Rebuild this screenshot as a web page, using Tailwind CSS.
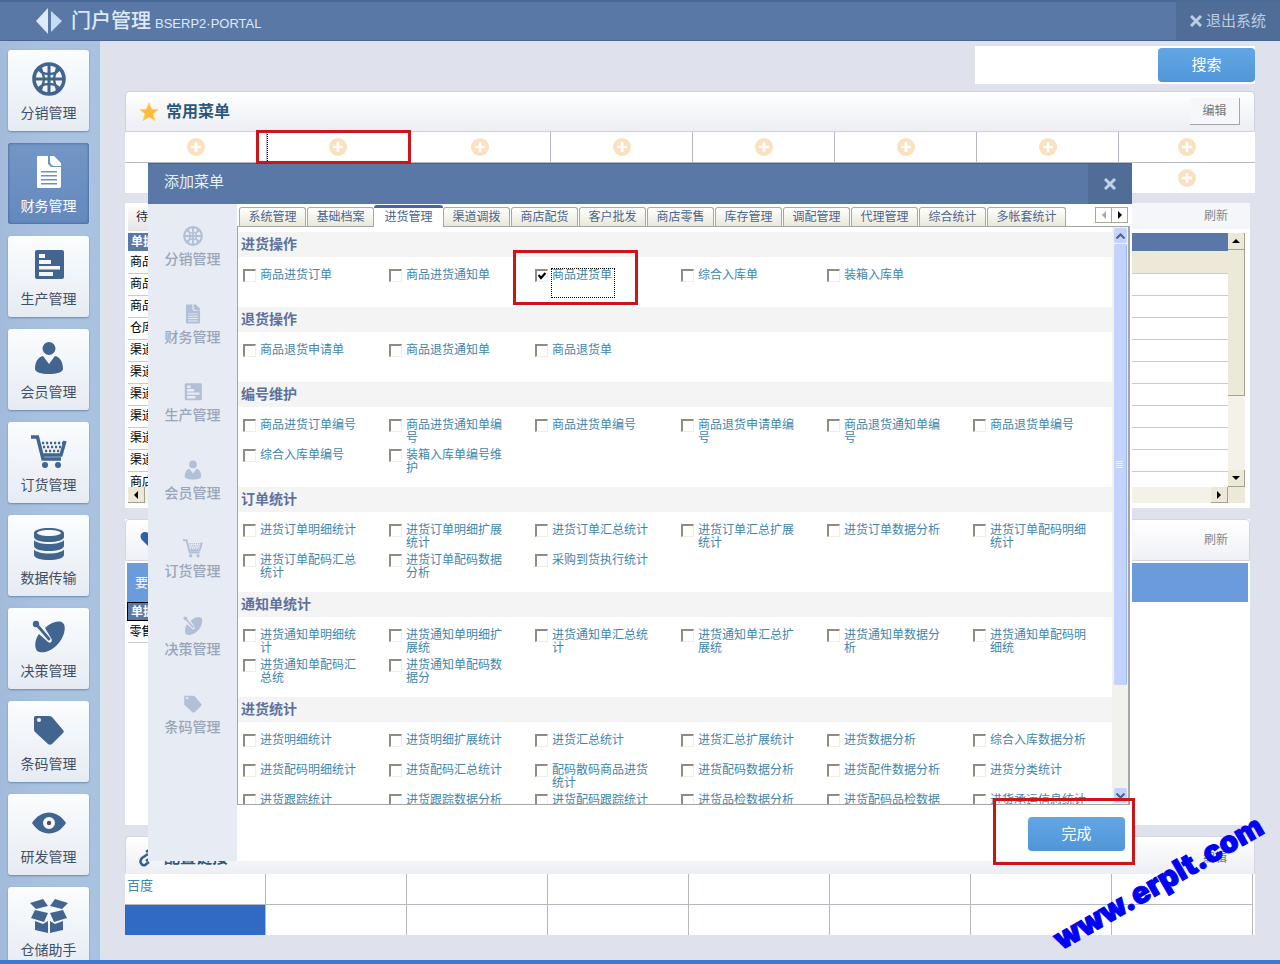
<!DOCTYPE html>
<html lang="zh-CN">
<head>
<meta charset="utf-8">
<title>门户管理 BSERP2·PORTAL</title>
<script src="https://cdn.jsdelivr.net/npm/@tailwindcss/browser@4"></script>
</head>
<body class="font-['Liberation_Sans','Noto_Sans_CJK_SC',sans-serif] text-xs text-gray-800">

<svg class="hidden" xmlns="http://www.w3.org/2000/svg">
  <symbol id="i-globe" viewBox="0 0 34 34"><g fill="none" stroke="currentColor" stroke-width="2.400"><circle cx="17" cy="17" r="15" stroke-width="3.600"/><path d="M17 2v30M2 17h30" stroke-width="3"/><path d="M6 6c2 5 6 6 11 6s9-1 11-6M6 28c2-5 6-6 11-6s9 1 11 6M9 4c-1 3 3 8 3 13s-4 10-3 13M25 4c1 3-3 8-3 13s4 10 3 13"/></g></symbol>
  <symbol id="i-doc" viewBox="0 0 34 34"><path fill="currentColor" fill-rule="evenodd" d="M6 1h10v8l3 3h10v19a2 2 0 0 1-2 2H6a1 1 0 0 1-1-1V2a1 1 0 0 1 1-1zM9 16h16v1.600H9zM9 20h16v1.600H9zM9 24h16v1.600H9zM9 28h16v1.600H9z"/><path fill="currentColor" d="M18 1h4l7 7v3h-6c-3 0-5-2-5-5z"/></symbol>
  <symbol id="i-list" viewBox="0 0 34 34"><path fill="currentColor" fill-rule="evenodd" d="M5 2h25a2 2 0 0 1 2 2v25a2 2 0 0 1-2 2H5a2 2 0 0 1-2-2V4a2 2 0 0 1 2-2zM7 6v4h6V6zM7 12v4h12v-4zM7 18v3.500h21V18zM7 24v4h14v-4z"/></symbol>
  <symbol id="i-user" viewBox="0 0 34 34"><g fill="currentColor"><circle cx="17" cy="7.500" r="6.500"/><path d="M3 28c0-7 3-12 8-13l6 8 6-8c5 1 8 6 8 13 0 3-6 5-14 5S3 31 3 28z"/></g></symbol>
  <symbol id="i-cart" viewBox="0 0 36 34"><path fill="none" stroke="currentColor" stroke-width="3.400" d="M0 3h6.500l5.500 22h18M34 7l-4 14H11"/><path fill="none" stroke="currentColor" stroke-width="2.400" stroke-dasharray="2.200 1.800" d="M11 9h21M12 13h18M14 17h15"/><g fill="currentColor"><circle cx="14" cy="31" r="3"/><circle cx="27" cy="31" r="3"/></g></symbol>
  <symbol id="i-db" viewBox="0 0 34 34"><g fill="currentColor"><path fill-rule="evenodd" d="M17 1c8 0 15 2 15 5v4c0 3-7 5-15 5S2 13 2 10V6c0-3 7-5 15-5zm0 2C10 3 5 4.500 5 6s5 3 12 3 12-1.500 12-3-5-3-12-3z"/><path d="M2 13c2 2.500 8 4 15 4s13-1.500 15-4v6c0 3-7 5-15 5S2 22 2 19z"/><path d="M2 22.500c2 2.500 8 4 15 4s13-1.500 15-4V28c0 3-7 5-15 5S2 31 2 28z"/></g></symbol>
  <symbol id="i-dish" viewBox="0 0 34 34"><path fill="currentColor" fill-rule="evenodd" d="M13 8c6-6 14-8 18-5 4 4 1 15-6 22-7 7-15 9-20 6-3-4-2-12 2-17l9 8c3 2 5-1 3-4z"/><path stroke="currentColor" stroke-width="2.800" stroke-linecap="round" d="M5 5l12 14"/><circle cx="4" cy="4" r="3.200" fill="currentColor"/></symbol>
  <symbol id="i-tag" viewBox="0 0 34 34"><path fill="currentColor" fill-rule="evenodd" d="M3 3h14c1 0 2 .5 3 1l11 13c1 1 1 2 0 3L20 31c-1 1-3 1-4 0L3 19c-1-1-1-2-1-3V4zM7 5a2 2 0 1 0 0 4 2 2 0 0 0 0-4z"/></symbol>
  <symbol id="i-eye" viewBox="0 0 34 34"><path fill="currentColor" fill-rule="evenodd" d="M0 17C9 3 25 3 34 17 25 31 9 31 0 17zM17 11a6 6 0 1 0 0 12 6 6 0 0 0 0-12z"/><circle cx="17" cy="17" r="2.200" fill="#5a4a50"/></symbol>
  <symbol id="i-box" viewBox="0 0 38 34"><path fill="currentColor" d="M0 4l13-4 5 7-12 3zM38 4L25 0l-5 7 12 3zM5 11l13 3-4 9-13-4zM33 11l-13 3 4 9 13-4zM5 22l8 3 5-3v12L5 31zM33 22l-8 3-5-3v12l13-3z"/></symbol>
  <symbol id="i-x" viewBox="0 0 12 12"><path stroke="currentColor" stroke-width="3" d="M1 1l10 10M11 1L1 11"/></symbol>
  <symbol id="i-plus" viewBox="0 0 18 18"><circle cx="9" cy="9" r="9" fill="#fbe1c0"/><path stroke="#fff" stroke-width="2.600" d="M9 4v10M4 9h10"/></symbol>
</svg>

<div class="relative flex h-screen flex-col overflow-hidden bg-[#dfe1ed]">
  <header class="flex h-[41px] shrink-0 items-stretch justify-between border-t-2 border-b border-t-[#4a6a98] border-b-[#46648f] bg-[#5a78a5]">
    <div class="flex items-center pl-9 text-[#dceafa]">
      <svg class="size-[26px]" viewBox="0 0 26 26"><path d="M12 0v26L0 13z" fill="#dceafa"/><path d="M15 3v21l11-11z" fill="#c5dcf5"/></svg>
      <h1 class="ml-[9px] text-xl leading-8 font-medium">门户管理</h1>
      <span class="ml-1 pt-1.5 text-[13px]">BSERP2·PORTAL</span>
    </div>
    <button class="flex items-center gap-1 bg-[#506d97] pr-[14px] pl-[14px] text-[15px] text-[#bccde4]"><svg class="size-3"><use href="#i-x"/></svg>退出系统</button>
  </header>

  <div class="flex min-h-0 flex-1">
    <nav id="side" class="flex w-[100px] shrink-0 flex-col items-center gap-3 overflow-hidden bg-gradient-to-r from-[#a3bbdb] via-[#a9c2e0] to-[#a9c2e0] pt-[9px] pr-[3px]"></nav>

    <main class="flex min-w-0 flex-1 flex-col pr-[25px] pl-[25px]">
      <form class="mt-[5px] flex h-[38px] w-[280px] shrink-0 self-end bg-white" onsubmit="return false">
        <input aria-label="搜索内容" class="min-w-0 flex-1 px-2 text-sm outline-none">
        <button class="mt-0.5 h-[34px] w-[97px] rounded bg-gradient-to-b from-[#62a6e4] to-[#5096d8] text-[15px] text-white">搜索</button>
      </form>

      <section class="mt-[7px] shrink-0">
        <div class="flex h-[41px] items-center rounded-t border border-[#ccd1de] bg-gradient-to-b from-white to-[#eceef4] pr-3.5 pl-[13px]">
          <svg class="size-5" viewBox="0 0 22 22"><path fill="#fdbb3a" stroke="#fcd27a" d="M11 1l3 7 7 .5-5.500 4.500 2 7.500L11 16.500 4.500 20.500l2-7.500L1 8.500 8 8z"/></svg>
          <h2 class="ml-[7px] text-base font-bold text-[#2a5878]">常用菜单</h2>
          <button class="ml-auto h-[27px] w-[50px] border-r border-b border-[#a5a5a5] bg-[#f6f7fa] text-[#777]">编辑</button>
        </div>
        <div id="fav" class="grid grid-cols-[repeat(7,142px)_1fr] bg-white"></div>
      </section>

      <section class="mt-[10px] mr-[5px] h-[305px] shrink-0 bg-white px-[3px]">
        <div class="flex h-[30px] items-start justify-between">
          <h2 class="h-7 w-20 bg-gradient-to-b from-white to-[#e4e4e4] pl-2 leading-7">待办事项</h2>
          <div class="-mr-[3px] h-[26px] flex-1 bg-[#f5f6fa] pr-[22px] text-right"><button class="leading-[26px] text-[#888]">刷新</button></div>
        </div>
        <div class="mr-0.5 grid grid-cols-[1fr_17px] grid-rows-[254px_16px]">
          <div class="overflow-hidden">
            <table class="w-full table-fixed border-collapse">
              <thead><tr class="h-[18px] bg-[#5a78a5] text-left text-white"><th class="w-[110px] pl-[3px] leading-[17px]">单据类型</th><th></th></tr></thead>
              <tbody id="todo"></tbody>
            </table>
          </div>
          <div class="flex flex-col bg-[#f3f1e8]">
            <span class="flex h-[17px] items-center justify-center border-r border-b border-[#a5a290] bg-[#ece9d8] text-black"><svg class="h-1 w-2" viewBox="0 0 8 4"><path d="M0 4l4-4 4 4z"/></svg></span>
            <span class="h-[146px] border-r border-b border-[#a5a290] bg-[#ece9d8]"></span>
            <span class="mt-auto flex h-[17px] items-center justify-center border-r border-b border-[#a5a290] bg-[#ece9d8] text-black"><svg class="h-1 w-2" viewBox="0 0 8 4"><path d="M0 0l4 4 4-4z"/></svg></span>
          </div>
          <div class="flex justify-between bg-[#f3f1e8]">
            <span class="flex w-[17px] items-center justify-center border-r border-b border-[#a5a290] bg-[#ece9d8]"><svg class="h-2 w-1" viewBox="0 0 4 8"><path d="M4 0L0 4l4 4z"/></svg></span>
            <span class="flex w-[17px] items-center justify-center border-r border-b border-[#a5a290] bg-[#ece9d8]"><svg class="h-2 w-1" viewBox="0 0 4 8"><path d="M0 0l4 4-4 4z"/></svg></span>
          </div>
          <div class="bg-[#ece9d8]"></div>
        </div>
      </section>

      <section class="mt-[11px] mr-[5px] h-[306px] shrink-0 bg-white">
        <div class="flex h-[42px] items-center rounded-t border border-[#d3d6e2] bg-gradient-to-b from-white to-[#f0f1f6] pr-[21px] pl-3.5">
          <svg class="h-4 w-5" viewBox="0 0 20 16"><path fill="#2a62ae" d="M10 16L2 8C-1 4 1 0 5 0c2 0 4 1 5 3 1-2 3-3 5-3 4 0 6 4 3 8z"/></svg>
          <h2 class="ml-2 text-base font-bold text-[#2a5878]">要货信息</h2>
          <button class="ml-auto text-[#888]">刷新</button>
        </div>
        <div class="mx-0.5 mt-0.5 h-[39px] bg-[#6c9bdc] pl-2 text-[13px] leading-[39px] text-white">要货单据</div>
        <table class="ml-0.5 w-[600px] border-collapse">
          <thead><tr class="h-[18px] border border-black bg-[#5a78a5] text-left text-white"><th class="pl-[3px] leading-[16px]">单据类型</th></tr></thead>
          <tbody><tr class="h-[22px] border-b border-[#ccc]"><td class="pl-0.5 text-black">零售单</td></tr></tbody>
        </table>
      </section>

      <section class="mt-[11px] shrink-0">
        <div class="flex h-[38px] items-center rounded-t border border-b-0 border-[#d3d6e2] bg-gradient-to-b from-white to-[#eceef4] pt-[5px] pr-[27px] pl-3">
          <svg class="size-[18px]" viewBox="0 0 18 18"><g fill="none" stroke="#2f5f9a" stroke-width="2.500"><path d="M10 5L4 9c-3 3-1 8 3 7l4-3"/><path d="M8 12l6-4c3-3 1-8-3-7L8 3"/></g></svg>
          <h2 class="ml-2 text-base font-bold text-[#2a5878]">配置链接</h2>
          <button class="ml-auto text-[#777]">编辑</button>
        </div>
        <div id="links" class="grid grid-cols-[repeat(8,141px)] bg-white"></div>
      </section>
    </main>
  </div>
  <div class="h-1 shrink-0 bg-[#3b7ad4]"></div>

  <!-- 添加菜单对话框 -->
  <div role="dialog" aria-labelledby="dlg" class="absolute top-[163px] right-[148px] left-[148px] bg-white">
    <div class="flex h-[41px] items-stretch justify-between border-t border-[#46648f] bg-[#5a78a5] pl-4">
      <h2 id="dlg" class="text-[15px] leading-9 text-[#e8f0fa]">添加菜单</h2>
      <button aria-label="关闭" class="flex w-11 items-center justify-center bg-[#506d97] text-[#c3d2e6]"><svg class="size-3"><use href="#i-x"/></svg></button>
    </div>
    <div class="flex">
      <nav id="dnav" class="flex w-[89px] shrink-0 flex-col gap-[35px] bg-[#e7ebf3] pt-[22px]"></nav>
      <div class="min-w-0 flex-1">
        <div class="flex h-[22px] items-end pl-0.5">
          <div id="tabs" role="tablist" class="z-10 flex items-end gap-px"></div>
          <div class="mr-1 mb-[3px] ml-auto flex h-4 border border-[#aca899]">
            <button aria-label="向左" class="flex w-4 items-center justify-center border-r border-[#aca899] text-[#aca899]"><svg class="h-2 w-1" viewBox="0 0 4 8"><path fill="currentColor" d="M4 0L0 4l4 4z"/></svg></button>
            <button aria-label="向右" class="flex w-[15px] items-center justify-center"><svg class="h-2 w-1" viewBox="0 0 4 8"><path d="M0 0l4 4-4 4z"/></svg></button>
          </div>
        </div>
        <div class="mr-0.5 flex h-[579px] border border-r-2 border-[#a3a7a4]">
          <div id="list" class="min-w-0 flex-1 overflow-hidden pt-[5px]"></div>
          <div class="flex w-4 shrink-0 flex-col items-center bg-[#f3f1ec] pt-px pb-px">
            <span class="flex h-[15px] w-[13px] items-center justify-center rounded-xs bg-[#c3d3fd]"><svg class="h-[6px] w-[9px]" viewBox="0 0 9 6"><path fill="none" stroke="#4d6185" stroke-width="2" d="M.5 5.500l4-4 4 4"/></svg></span>
            <span class="mt-px flex h-[441px] w-[13px] items-center justify-center rounded-xs border-r border-[#9db5ee] bg-[#c3d3fd]"><svg class="h-2 w-[7px]" viewBox="0 0 7 8"><path stroke="#eef4fe" d="M0 .5h7M0 2.500h7M0 4.500h7M0 6.500h7"/></svg></span>
            <span class="mt-auto flex h-[15px] w-[13px] items-center justify-center rounded-xs bg-[#c3d3fd]"><svg class="h-[6px] w-[9px]" viewBox="0 0 9 6"><path fill="none" stroke="#4d6185" stroke-width="2" d="M.5 .5l4 4 4-4"/></svg></span>
          </div>
        </div>
        <div class="flex h-14 items-start justify-end pt-3 pr-[7px]">
          <button class="h-[34px] w-[97px] rounded bg-gradient-to-b from-[#62a6e4] to-[#5096d8] text-[15px] text-white">完成</button>
        </div>
      </div>
    </div>
  </div>

  <!-- 操作标注 -->
  <div class="pointer-events-none absolute top-[130px] left-[256px] h-[34px] w-[155px] border-3 border-[#cb1518]"></div>
  <div class="pointer-events-none absolute top-[250px] left-[513px] h-[55px] w-[125px] border-3 border-[#cb1518]"></div>
  <div class="pointer-events-none absolute top-[798px] right-[145px] h-[67px] w-[142px] border-3 border-[#cb1518]"></div>
  <div class="pointer-events-none absolute top-[862px] right-0 w-[244px] -rotate-30 text-center font-['Inter'] text-[30px] leading-10 font-black whitespace-nowrap text-[#0000f5] [-webkit-text-stroke:1px_#0000f5]">www.erplt.com</div>
</div>

<script>
const $ = id => document.getElementById(id);
const side = [['globe','分销管理'],['doc','财务管理'],['list','生产管理'],['user','会员管理'],['cart','订货管理'],['db','数据传输'],['dish','决策管理'],['tag','条码管理'],['eye','研发管理'],['box','仓储助手']];
$('side').innerHTML = side.map(([i, t], n) => `<a href="#" class="flex h-[81px] w-[81px] shrink-0 flex-col items-center rounded-[3px] pt-3 text-sm leading-5 ${n === 1 ? 'bg-gradient-to-b from-[#7396c6] to-[#6489bd] text-white shadow-[inset_0_0_3px_#35588c]' : 'bg-gradient-to-b from-[#fbfdfe] to-[#e6ebf3] text-[#3f4f66] shadow-[0_1px_2px_#6d87a8]'}"><svg class="h-[34px] w-[38px] ${n === 1 ? 'text-white' : 'text-[#42658f]'}"><use href="#i-${i}"/></svg><span class="mt-[7px]">${t}</span></a>`).join('');
$('dnav').innerHTML = [0, 1, 2, 3, 4, 6, 7].map(n => `<a href="#" class="flex flex-col items-center gap-[3px] text-sm leading-5 font-medium text-[#99a6b9]"><svg class="size-5 text-[#b1c0d6]"><use href="#i-${side[n][0]}"/></svg>${side[n][1]}</a>`).join('');

const plus = '<svg class="size-[18px]"><use href="#i-plus"/></svg>';
$('fav').innerHTML = Array.from({length: 16}, (_, n) => `<button aria-label="添加" class="flex items-center justify-center ${n < 8 ? 'h-[31px] border-b border-b-[#b5b8c0]' : 'h-[30px]'} ${n % 8 < 7 ? 'border-r border-r-[#b5b8c0]' : ''} ${n === 1 ? 'outline-1 -outline-offset-1 outline-dotted outline-black' : ''}">${plus}</button>`).join('');
$('links').innerHTML = Array.from({length: 16}, (_, n) => `<div class="border-r border-r-[#b5b8c0] pl-0.5 leading-6 ${n < 8 ? 'h-[31px] border-b border-b-[#b5b8c0]' : 'h-[30px]'} ${n === 8 ? 'bg-[#316ac5]' : ''}">${n ? '' : '<a href="#" class="text-[13px] text-[#3f86ab]">百度</a>'}</div>`).join('');
$('todo').innerHTML = ['商品进货单','商品退货单','商品调价单','仓库调拨单','渠道订货单','渠道配货单','渠道退货单','渠道调拨单','渠道通知单','渠道结算单','商店配货单'].map((t, n) => `<tr class="h-[22px] border-b border-[#c8cacc]"><td class="pl-0.5 text-black">${t}</td><td class="${n ? '' : 'bg-[#ece9d8]'}"></td></tr>`).join('');

$('tabs').innerHTML = ['系统管理','基础档案','进货管理','渠道调拨','商店配货','客户批发','商店零售','库存管理','调配管理','代理管理','综合统计','多帐套统计'].map((t, n) => `<button role="tab" class="shrink-0 rounded-t-[3px] text-[#4a6590] ${n === 11 ? 'w-[79px]' : n === 2 ? '-mx-px w-[69px]' : 'w-[67px]'} ${n === 2 ? '-mb-px h-[22px] border-t-3 border-[#4468a4] bg-white pb-0.5' : 'h-[19px] border border-b-0 border-[#a9a998] bg-gradient-to-b from-white to-[#eae8d8]'}">${t}</button>`).join('');

const groups = [
  ['进货操作', '商品进货订单 商品进货通知单 *商品进货单 综合入库单 装箱入库单'],
  ['退货操作', '商品退货申请单 商品退货通知单 商品退货单'],
  ['编号维护', '商品进货订单编号 商品进货通知单编号 商品进货单编号 商品退货申请单编号 商品退货通知单编号 商品退货单编号 综合入库单编号 装箱入库单编号维护'],
  ['订单统计', '进货订单明细统计 进货订单明细扩展统计 进货订单汇总统计 进货订单汇总扩展统计 进货订单数据分析 进货订单配码明细统计 进货订单配码汇总统计 进货订单配码数据分析 采购到货执行统计'],
  ['通知单统计', '进货通知单明细统计 进货通知单明细扩展统 进货通知单汇总统计 进货通知单汇总扩展统 进货通知单数据分析 进货通知单配码明细统 进货通知单配码汇总统 进货通知单配码数据分'],
  ['进货统计', '进货明细统计 进货明细扩展统计 进货汇总统计 进货汇总扩展统计 进货数据分析 综合入库数据分析 进货配码明细统计 进货配码汇总统计 配码散码商品进货统计 进货配码数据分析 进货配件数据分析 进货分类统计 进货跟踪统计 进货跟踪数据分析 进货配码跟踪统计 进货品检数据分析 进货配码品检数据 进货承运信息统计']
];
$('list').innerHTML = groups.map(([h, items], g) => `<section><h3 class="h-[25px] bg-[#f4f4f4] pl-[3px] text-sm leading-6 font-bold text-[#5d719c]">${h}</h3><div class="grid auto-rows-[30px] grid-cols-[repeat(6,146px)] pt-3 pb-2 pl-[5px]">${items.split(' ').map((s, n) => {
  const on = s[0] === '*', t = on ? s.slice(1) : s, id = 'c' + g + '_' + n;
  return `<div class="flex items-start gap-1"><span class="relative flex"><input type="checkbox" id="${id}" ${on ? 'checked' : ''} class="peer size-[13px] appearance-none border-t-2 border-l-2 border-r border-b border-t-[#8f8c82] border-l-[#8f8c82] border-r-[#f1efe2] border-b-[#f1efe2] bg-white"><svg class="pointer-events-none absolute top-[3px] left-[3px] hidden size-2 peer-checked:block" viewBox="0 0 8 8"><path fill="none" stroke="#000" stroke-width="2.200" d="M.5 3l2.500 3L7.500 1"/></svg></span><label for="${id}" class="max-w-[98px] text-xs leading-[13px] break-all text-[#3f86ab] ${on ? 'h-7 w-[62px] outline-1 outline-dotted outline-black' : ''}">${t}</label></div>`;
}).join('')}</div></section>`).join('');
</script>
</body>
</html>
